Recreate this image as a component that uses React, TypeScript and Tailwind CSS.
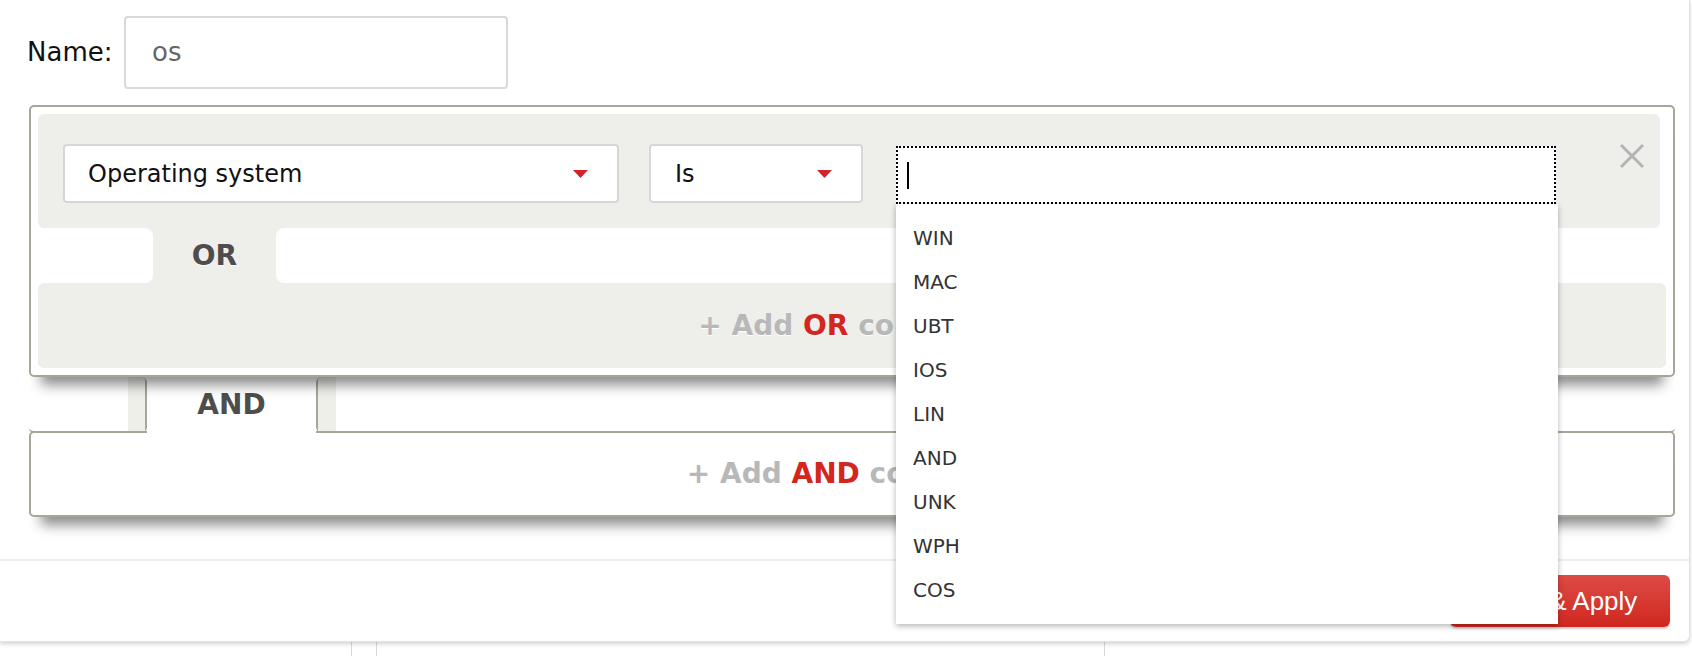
import React from "react";

function Arrow() {
  return (
    <svg width="15" height="8" viewBox="0 0 15 8" className="shrink-0">
      <polygon points="0,0 15,0 7.5,8" fill="#d2232a" />
    </svg>
  );
}

export default function App() {
  const items = ["WIN", "MAC", "UBT", "IOS", "LIN", "AND", "UNK", "WPH", "COS"];
  return (
    <div className="w-[1692px] h-[656px] overflow-hidden bg-white font-['DejaVu_Sans',Verdana,sans-serif] flex flex-col">
      {/* modal */}
      <div className="relative z-10 w-[1690px] h-[642px] shrink-0 bg-white border-r border-b border-[#e3e3e3] rounded-br-[6px] shadow-[0_2px_4px_rgba(0,0,0,0.18)] flex flex-col">
        <div className="pt-[16px] pl-[29px] pr-[14px] flex flex-col">
          {/* name row */}
          <div className="flex items-center h-[73px]">
            <div className="-ml-[2px] w-[97px] text-[26px] text-[#111]">Name:</div>
            <div className="w-[384px] h-[73px] border-2 border-[#d9d9d9] rounded-[4px] pl-[26px] flex items-center text-[26px] text-[#666]">
              os
            </div>
          </div>

          {/* OR group box */}
          <div className="mt-[16px] relative z-20 border-2 border-[#a9a599] rounded-[5px] p-[7px] bg-white shadow-[0_20px_12px_-12px_rgba(0,0,0,0.45)]">
            {/* condition row */}
            <div className="h-[114px] mr-[6px] bg-[#eeeeea] rounded-[6px] flex items-start pt-[30px] pl-[25px]">
              <div className="w-[556px] h-[59px] bg-white border-2 border-[#d6d6d6] rounded-[4px] flex items-center justify-between pl-[23px] pr-[29px] text-[24px] text-[#111]">
                <span>Operating system</span>
                <Arrow />
              </div>
              <div className="ml-[30px] w-[214px] h-[59px] bg-white border-2 border-[#d6d6d6] rounded-[4px] flex items-center justify-between pl-[24px] pr-[29px] text-[24px] text-[#111]">
                <span>Is</span>
                <Arrow />
              </div>
              <div className="relative ml-[33px] mt-[2px] w-[660px] h-[58px] bg-white border-2 border-dotted border-black shadow-[0_2px_0_#cfcfcf] flex items-center">
                <div className="ml-[9px] w-[2px] h-[27px] bg-black" />
                {/* dropdown */}
                <div className="absolute left-[-2px] top-[56px] w-[662px] z-50 bg-white shadow-[0_2px_6px_rgba(0,0,0,0.3)] py-[12px]">
                  {items.map((it) => (
                    <div key={it} className="h-[44px] flex items-center pl-[17px] text-[20px] text-[#333]">
                      {it}
                    </div>
                  ))}
                </div>
              </div>
              <div className="ml-[63px] -mt-[1px] w-[26px] h-[26px]">
                <svg width="26" height="26" viewBox="0 0 26 26">
                  <line x1="2" y1="2" x2="24" y2="24" stroke="#b3b3b3" strokeWidth="3" />
                  <line x1="24" y1="2" x2="2" y2="24" stroke="#b3b3b3" strokeWidth="3" />
                </svg>
              </div>
            </div>

            {/* OR connector */}
            <div className="flex h-[55px] bg-[#eeeeea]">
              <div className="w-[115px] bg-white rounded-r-[8px]" />
              <div className="w-[123px] flex items-center justify-center text-[28px] font-bold text-[#4d4d4d] [text-shadow:0_1px_0_#fff]">
                OR
              </div>
              <div className="flex-1 bg-white rounded-l-[8px]" />
            </div>

            {/* add OR */}
            <div className="h-[85px] bg-[#eeeeea] rounded-[6px] flex items-center justify-center text-[28px] font-bold text-[#b8b8b8] [text-shadow:0_1px_0_#fff] whitespace-pre">
              <span>+ Add </span>
              <span className="text-[#d3261d]">OR</span>
              <span> condition</span>
            </div>
          </div>

          {/* AND connector */}
          <div className="relative z-10 flex h-[56px] -mb-[2px]">
            <div className="w-[118px] border-r-2 border-b-2 border-[#a9a599] rounded-r-[6px] rounded-bl-[5px] flex justify-end">
              <div className="w-[17px] h-full bg-[#efefea] rounded-tr-[4px]" />
            </div>
            <div className="w-[169px] bg-white flex items-center justify-center text-[28px] font-bold text-[#4d4d4d]">
              AND
            </div>
            <div className="flex-1 border-l-2 border-b-2 border-[#a9a599] rounded-l-[6px] rounded-br-[5px] flex">
              <div className="w-[18px] h-full bg-[#efefea] rounded-tl-[4px]" />
            </div>
          </div>

          {/* add AND */}
          <div className="h-[86px] border-2 border-[#a9a599] rounded-[5px] bg-white flex items-center justify-center text-[28px] font-bold text-[#b8b8b8] whitespace-pre shadow-[0_20px_12px_-12px_rgba(0,0,0,0.45)]">
            <span>+ Add </span>
            <span className="text-[#d3261d]">AND</span>
            <span> condition</span>
          </div>
        </div>

        {/* footer */}
        <div className="mt-[42px] h-[2px] bg-[#efefef]" />
        <div className="flex-1 flex items-center justify-end pr-[19px]">
          <div className="w-[220px] h-[52px] rounded-[6px] bg-linear-to-b from-[#dd4a44] to-[#cf261e] shadow-[0_2px_2px_rgba(0,0,0,0.2)] flex items-center justify-center text-white text-[26px] font-['Liberation_Sans',Arial,sans-serif]">
            Save &amp; Apply
          </div>
        </div>
      </div>

      {/* background table below modal */}
      <div className="flex flex-1 bg-white">
        <div className="w-[352px] border-r border-[#d8d8d8]" />
        <div className="w-[25px] border-r border-[#d8d8d8]" />
        <div className="w-[728px] border-r border-[#d8d8d8]" />
        <div className="flex-1" />
      </div>
    </div>
  );
}
